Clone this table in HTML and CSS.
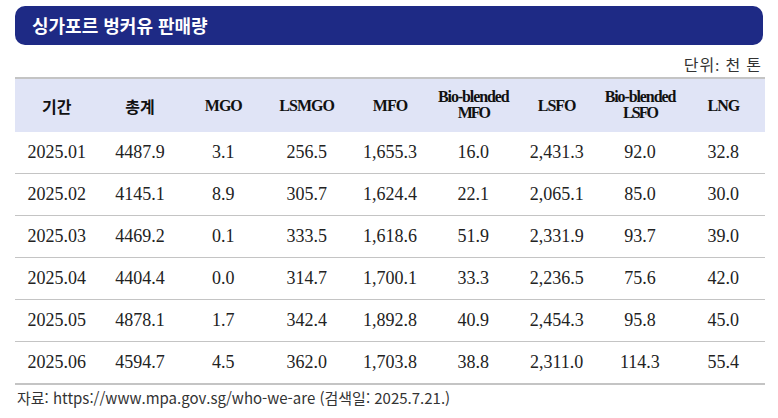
FILE: index.html
```html
<!DOCTYPE html>
<html lang="ko">
<head>
<meta charset="utf-8">
<title>싱가포르 벙커유 판매량</title>
<link rel="stylesheet" href="styles.css">
</head>
<body>
<div class="page">
  <div class="title-bar">싱가포르 벙커유 판매량</div>
  <div class="unit">단위: 천 톤</div>
  <table class="data">
    <thead>
      <tr>
        <th class="ko">기간</th>
        <th class="ko">총계</th>
        <th>MGO</th>
        <th>LSMGO</th>
        <th>MFO</th>
        <th class="two">Bio-blended<br><span class="tight">MFO</span></th>
        <th>LSFO</th>
        <th class="two">Bio-blended<br><span class="tight">LSFO</span></th>
        <th>LNG</th>
      </tr>
    </thead>
    <tbody>
      <tr><td>2025.01</td><td>4487.9</td><td>3.1</td><td>256.5</td><td>1,655.3</td><td>16.0</td><td>2,431.3</td><td>92.0</td><td>32.8</td></tr>
      <tr><td>2025.02</td><td>4145.1</td><td>8.9</td><td>305.7</td><td>1,624.4</td><td>22.1</td><td>2,065.1</td><td>85.0</td><td>30.0</td></tr>
      <tr><td>2025.03</td><td>4469.2</td><td>0.1</td><td>333.5</td><td>1,618.6</td><td>51.9</td><td>2,331.9</td><td>93.7</td><td>39.0</td></tr>
      <tr><td>2025.04</td><td>4404.4</td><td>0.0</td><td>314.7</td><td>1,700.1</td><td>33.3</td><td>2,236.5</td><td>75.6</td><td>42.0</td></tr>
      <tr><td>2025.05</td><td>4878.1</td><td>1.7</td><td>342.4</td><td>1,892.8</td><td>40.9</td><td>2,454.3</td><td>95.8</td><td>45.0</td></tr>
      <tr><td>2025.06</td><td>4594.7</td><td>4.5</td><td>362.0</td><td>1,703.8</td><td>38.8</td><td>2,311.0</td><td>114.3</td><td>55.4</td></tr>
    </tbody>
  </table>
  <div class="source">자료: https://www.mpa.gov.sg/who-we-are (검색일: 2025.7.21.)</div>
</div>
</body>
</html>
```

FILE: styles.css
```css
html, body {
  margin: 0;
  padding: 0;
  background: #ffffff;
}

.page {
  width: 778px;
  padding-top: 6px;
  color: #222222;
  font-family: "Liberation Serif", "Noto Sans CJK KR", serif;
}

.title-bar {
  margin: 0 15px;
  height: 39px;
  line-height: 39px;
  border-radius: 10px;
  background: #1e2a85;
  color: #ffffff;
  font-family: "Noto Sans CJK KR", sans-serif;
  font-weight: 700;
  font-size: 18px;
  padding-left: 17px;
  box-sizing: border-box;
}

.unit {
  margin: 0 15px 0 15px;
  height: 32px;
  line-height: 42px;
  text-align: right;
  font-size: 16px;
  letter-spacing: 1px;
  color: #333333;
  padding-right: 1px;
}

.data {
  margin-left: 15px;
  width: 750px;
  border-collapse: collapse;
  table-layout: fixed;
  border-top: 2px solid #c4c4c4;
}

.data th {
  height: 51px;
  padding: 0;
  background: #e0e4f6;
  font-weight: 700;
  font-size: 16px;
  letter-spacing: -1px;
  color: #111111;
  text-align: center;
  vertical-align: middle;
}

.data th.ko {
  font-family: "Noto Sans CJK KR", sans-serif;
  font-weight: 700;
  font-size: 16px;
  letter-spacing: 0;
}

.data th.two {
  font-size: 16px;
  line-height: 16px;
  letter-spacing: -1.1px;
  padding-bottom: 2px;
}

.data th .tight {
  letter-spacing: -2px;
}

.data td {
  height: 41px;
  padding: 0;
  text-align: center;
  vertical-align: middle;
  font-size: 18px;
  color: #222222;
}

.data tbody tr + tr td {
  border-top: 1px solid #c4c4c4;
}

.data tbody tr:last-child td {
  border-bottom: 2px solid #c4c4c4;
}

.source {
  margin-left: 17px;
  margin-top: 1px;
  font-family: "Noto Sans CJK KR", sans-serif;
  font-size: 15px;
  line-height: 24px;
  color: #333333;
}
```
